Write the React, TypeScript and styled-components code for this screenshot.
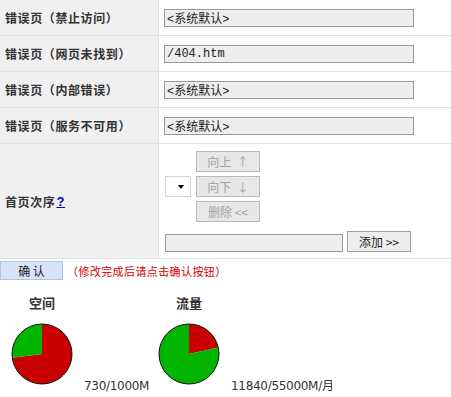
import React from "react";
import styled, { createGlobalStyle } from "styled-components";

const Global = createGlobalStyle`
  html, body { margin: 0; padding: 0; background: #fff; }
  body {
    font-family: "Noto Sans CJK SC", "DejaVu Sans", sans-serif;
    font-size: 12px;
    color: #222;
  }
`;

const Table = styled.div`
  display: grid;
  grid-template-columns: 158px 1fr;
  grid-template-rows: 35px 35px 35px 35px 114px;
  gap: 1px;
  background: #e2e2e2;
  border-bottom: 1px solid #e2e2e2;
  width: 451px;
`;

const LabelCell = styled.div`
  background: #f0f0f0;
  display: flex;
  align-items: center;
  padding-left: 5px;
  font-weight: bold;
  font-size: 12px;
  letter-spacing: 0.6px;
  color: #333;
`;

const ValueCell = styled.div`
  background: #fff;
  display: flex;
  align-items: center;
  padding-left: 5px;
`;

const TextInput = styled.input<{ $w: number }>`
  box-sizing: border-box;
  width: ${(p) => p.$w}px;
  height: 18px;
  margin: 0;
  border: 1px solid #999;
  background: #eeeeee;
  font-family: "Liberation Mono", "Noto Sans CJK SC", monospace;
  font-size: 12px;
  color: #222;
  padding: 0 2px;
  outline: none;
`;

const HelpLink = styled.a`
  color: #0000cc;
  text-decoration: underline;
  font-weight: bold;
  font-family: "Liberation Sans", sans-serif;
  font-size: 13px;
  margin-left: 1px;
`;

const OrderCell = styled.div`
  background: #fff;
  display: flex;
  flex-direction: column;
  padding: 7px 0 0 6px;
`;

const OrderTop = styled.div`
  display: flex;
  align-items: center;
  gap: 5px;
`;

const SelectBox = styled.div`
  box-sizing: border-box;
  width: 26px;
  height: 21px;
  border: 1px solid #d4d4d4;
  background: #fff;
  display: flex;
  align-items: center;
  justify-content: flex-end;
  padding-right: 6px;
`;

const Caret = styled.span`
  width: 0;
  height: 0;
  border-left: 3.5px solid transparent;
  border-right: 3.5px solid transparent;
  border-top: 4px solid #000;
`;

const ButtonStack = styled.div`
  display: flex;
  flex-direction: column;
  gap: 4px;
`;

const Btn = styled.button<{ $disabled?: boolean }>`
  box-sizing: border-box;
  width: 64px;
  height: 21px;
  margin: 0;
  padding: 0;
  border: 1px solid ${(p) => (p.$disabled ? "#b8b8b8" : "#a0a0a0")};
  background: ${(p) => (p.$disabled ? "#e7e7e7" : "#eeeeee")};
  color: ${(p) => (p.$disabled ? "#a3a3a3" : "#222")};
  font-family: "Noto Sans CJK SC", sans-serif;
  font-size: 12px;
  line-height: 19px;
  text-align: center;
  white-space: pre;
`;

const OrderBottom = styled.div`
  display: flex;
  align-items: flex-end;
  gap: 4px;
  margin-top: 9px;
`;

const ConfirmRow = styled.div`
  display: flex;
  align-items: center;
  margin-top: 2px;
`;

const ConfirmBtn = styled.button`
  box-sizing: border-box;
  width: 63px;
  height: 19px;
  margin: 0;
  padding: 0;
  border: 1px solid #b3c3de;
  background: #d6e3f9;
  color: #222;
  font-family: "Noto Sans CJK SC", sans-serif;
  font-size: 12px;
  line-height: 17px;
  white-space: pre;
`;

const Notice = styled.span`
  color: #d40000;
  font-size: 11px;
  letter-spacing: 0.4px;
  margin-left: 4px;
`;

const Charts = styled.div`
  display: flex;
  align-items: flex-end;
  margin-top: 14px;
`;

const ChartCol = styled.div`
  width: 84px;
  display: flex;
  flex-direction: column;
  align-items: center;
`;

const ChartTitle = styled.div`
  font-weight: bold;
  font-size: 13px;
  line-height: 18px;
  color: #333;
  margin-bottom: 11px;
`;

const PieSvg = styled.svg`
  display: block;
  margin-bottom: 8px;
`;

const Usage = styled.div<{ $w?: number }>`
  width: ${(p) => (p.$w ? `${p.$w}px` : "auto")};
  font-family: "DejaVu Sans", "Noto Sans CJK SC", sans-serif;
  font-size: 12px;
  line-height: 14px;
  color: #333;
  letter-spacing: -0.3px;
`;

function wedge(cx: number, cy: number, r: number, a0: number, a1: number) {
  const x0 = cx + r * Math.sin(a0);
  const y0 = cy - r * Math.cos(a0);
  const x1 = cx + r * Math.sin(a1);
  const y1 = cy - r * Math.cos(a1);
  const large = a1 - a0 > Math.PI ? 1 : 0;
  return `M${cx},${cy} L${x0},${y0} A${r},${r} 0 ${large} 1 ${x1},${y1} Z`;
}

const Pie: React.FC<{ used: number; total: number }> = ({ used, total }) => {
  const f = used / total;
  const a = f * Math.PI * 2;
  const c = 31;
  const r = 30;
  return (
    <PieSvg width={62} height={62} viewBox="0 0 62 62">
      <path d={wedge(c, c, r, 0, a)} fill="#c80000" />
      <path d={wedge(c, c, r, a, Math.PI * 2)} fill="#00b400" />
      <circle cx={c} cy={c} r={r} fill="none" stroke="#111" strokeWidth={1} />
    </PieSvg>
  );
};

const rows = [
  { label: "错误页（禁止访问）", value: "<系统默认>" },
  { label: "错误页（网页未找到）", value: "/404.htm" },
  { label: "错误页（内部错误）", value: "<系统默认>" },
  { label: "错误页（服务不可用）", value: "<系统默认>" },
];

export default function App() {
  return (
    <>
      <Global />
      <Table>
        {rows.map((r) => (
          <React.Fragment key={r.label}>
            <LabelCell>{r.label}</LabelCell>
            <ValueCell>
              <TextInput $w={250} readOnly defaultValue={r.value} />
            </ValueCell>
          </React.Fragment>
        ))}
        <LabelCell>
          首页次序<HelpLink href="#">?</HelpLink>
        </LabelCell>
        <OrderCell>
          <OrderTop>
            <SelectBox>
              <Caret />
            </SelectBox>
            <ButtonStack>
              <Btn $disabled>{"向上  ↑"}</Btn>
              <Btn $disabled>{"向下  ↓"}</Btn>
              <Btn $disabled>{"删除 <<"}</Btn>
            </ButtonStack>
          </OrderTop>
          <OrderBottom>
            <TextInput $w={178} readOnly defaultValue="" />
            <Btn>{"添加 >>"}</Btn>
          </OrderBottom>
        </OrderCell>
      </Table>
      <ConfirmRow>
        <ConfirmBtn>{"确 认"}</ConfirmBtn>
        <Notice>（修改完成后请点击确认按钮）</Notice>
      </ConfirmRow>
      <Charts>
        <ChartCol>
          <ChartTitle>空间</ChartTitle>
          <Pie used={730} total={1000} />
        </ChartCol>
        <Usage $w={63}>730/1000M</Usage>
        <ChartCol>
          <ChartTitle>流量</ChartTitle>
          <Pie used={11840} total={55000} />
        </ChartCol>
        <Usage>11840/55000M/月</Usage>
      </Charts>
    </>
  );
}
